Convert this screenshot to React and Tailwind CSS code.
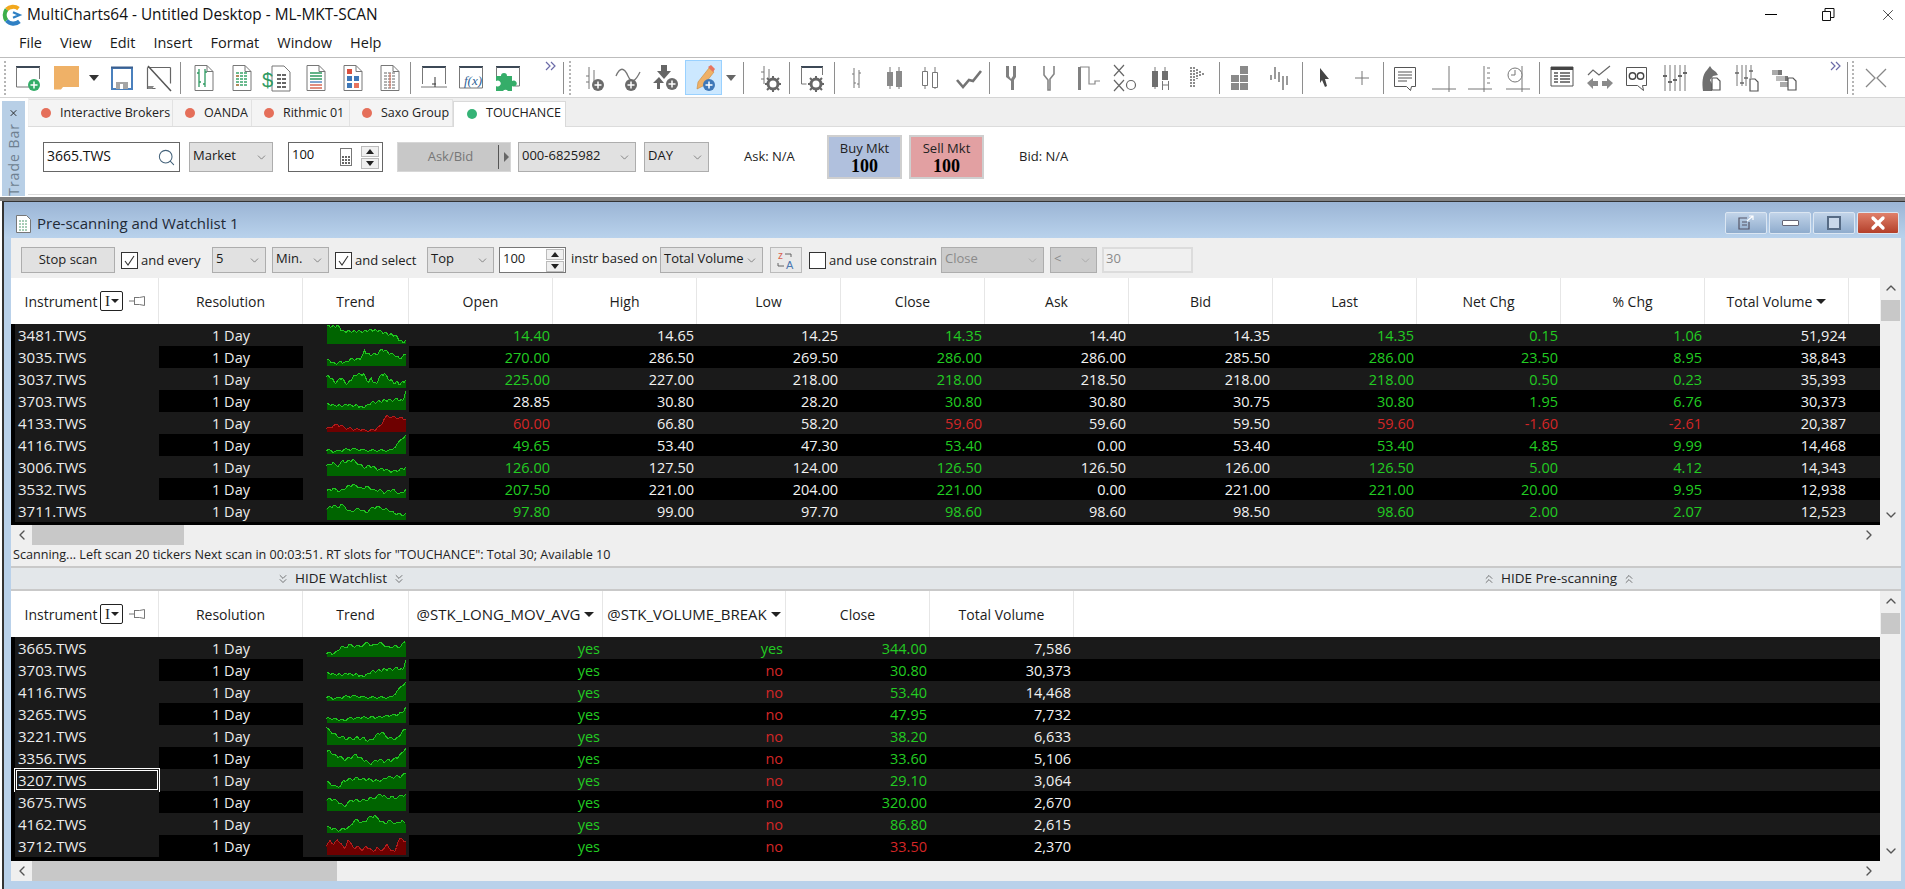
import { ChevronDown, ChevronLeft, ChevronRight, ChevronUp, ChevronsDown, ChevronsUp, Search, X } from "lucide-react";

const G = "#767676";

const Svg = ({ w = 28, h = 28, children }) => (
  <svg width={w} height={h} viewBox={`0 0 ${w} ${h}`} fill="none" className="shrink-0">
    {children}
  </svg>
);

const Plus = ({ x = 20, y = 21, r = 6, c = "#6a6a6a" }) => (
  <g>
    <circle cx={x} cy={y} r={r} fill={c} />
    <path d={`M${x} ${y - r + 2.5}v${2 * r - 5}M${x - r + 2.5} ${y}h${2 * r - 5}`} stroke="#fff" strokeWidth="1.5" />
  </g>
);

const Gear = ({ x = 20, y = 20 }) => (
  <g>
    <circle cx={x} cy={y} r="5" stroke="#666" strokeWidth="3" />
    <path d={`M${x} ${y - 8}v3M${x} ${y + 5}v3M${x - 8} ${y}h3M${x + 5} ${y}h3M${x - 6} ${y - 6}l2 2M${x + 4} ${y + 4}l2 2M${x + 6} ${y - 6}l-2 2M${x - 4} ${y + 4}l-2 2`} stroke="#666" strokeWidth="2" />
  </g>
);

const Doc = ({ children }) => (
  <Svg>
    <path d="M5 1.5h12l6 6v19H5z" fill="#fff" stroke="#777" />
    <path d="M17 1.5v6h6" stroke="#777" />
    {children}
  </Svg>
);

const MiniDoc = ({ x = 18, y = 16 }) => (
  <path d={`M${x} ${y}h5l3 3v9h-8z`} fill="#fff" stroke="#555" strokeWidth="1.2" />
);

const DotHandle = () => <div className="h-[34px] ml-[4px] w-[2px] border-l-2 border-dotted border-[#b5b5b5]" />;

const icons = {
  newChart: (
    <Svg>
      <path d="M2 3h24" stroke="#3c4856" strokeWidth="2" />
      <path d="M2.5 3v20h13M25.5 3v12" stroke="#777" />
      <Plus x={20} y={21} r={6} c="#35ad69" />
    </Svg>
  ),
  folder: (
    <Svg>
      <path d="M1 2h25v21H10l-2 2.5H1z" fill="#efb167" />
    </Svg>
  ),
  save: (
    <Svg>
      <path d="M4 4h20v21H4z" fill="#fff" stroke="#4a80bd" strokeWidth="2" />
      <path d="M3 3.5h22" stroke="#3a5f8f" strokeWidth="2" />
      <path d="M8 18h12v7H8z" fill="#a5a5a5" />
      <path d="M12 20h3v5h-3z" fill="#fff" />
    </Svg>
  ),
  noSave: (
    <Svg>
      <path d="M2.5 3.5h23M25.5 3.5v16M2.5 3.5v21h8" stroke="#666" strokeWidth="1.2" />
      <path d="M3 22h6l-2 3H3z" fill="#888" />
      <path d="M3 2l23 25" stroke="#555" strokeWidth="1.5" />
    </Svg>
  ),
  docBars: (
    <Doc>
      <path d="M9 5v18M15 5v18M9 9H7M9 18h2M15 8h2M15 20h-2" stroke="#2f9a62" strokeWidth="1.3" />
    </Doc>
  ),
  docGrid: (
    <Doc>
      <path d="M8 9h12M8 12h12M8 15h12M8 18h12M8 21h12" stroke="#3aa56b" strokeWidth="1.4" strokeDasharray="3 1" />
      <path d="M8 12h12M8 21h12" stroke="#c97b4a" strokeWidth="1.4" strokeDasharray="3 9" />
    </Doc>
  ),
  docDollar: (
    <Svg w={32}>
      <path d="M10 2h12l6 6v19H10z" fill="#fff" stroke="#777" />
      <path d="M15 11h10M15 15h10M15 19h10M15 23h10" stroke="#666" strokeWidth="2" strokeDasharray="4 1" />
      <text x="0" y="23" fontSize="20" fill="#2f9a62" fontFamily="Liberation Sans">$</text>
    </Svg>
  ),
  docLines: (
    <Doc>
      <path d="M8 9h12M8 12h12M8 15h12" stroke="#2f9a62" strokeWidth="1.3" />
      <path d="M8 18h12" stroke="#3f78b8" strokeWidth="1.3" />
      <path d="M8 21h12M8 24h12" stroke="#d86a55" strokeWidth="1.3" />
    </Doc>
  ),
  docSquares: (
    <Doc>
      <path d="M8 5h5v5H8z" fill="#d9503f" />
      <path d="M8 12h5v5H8zM15 12h5v5h-5z" fill="#3f78b8" />
      <path d="M8 19h5v5H8z" fill="#3f78b8" />
      <path d="M15 19h5v5h-5z" fill="#e8745f" />
    </Doc>
  ),
  docTable: (
    <Doc>
      <path d="M8 9h12M8 12h12M8 15h12M8 18h12M8 21h12M8 24h12" stroke="#666" strokeWidth="1.2" strokeDasharray="3 1" />
      <path d="M14 9v15" stroke="#d86a55" />
    </Doc>
  ),
  winCross: (
    <Svg>
      <path d="M2 3h24" stroke="#3c4856" strokeWidth="2" />
      <path d="M2.5 3v17M25.5 3v17M1 23h26" stroke="#777" />
      <path d="M15 13v10" stroke="#333" />
      <path d="M12 20h4" stroke="#333" />
    </Svg>
  ),
  winFx: (
    <Svg>
      <path d="M2 3h24" stroke="#3c4856" strokeWidth="2" />
      <path d="M2.5 3v21h23V3" stroke="#777" />
      <text x="7" y="21" fontSize="13" fontStyle="italic" fill="#2f5f96" fontFamily="Liberation Serif">f(x)</text>
    </Svg>
  ),
  winPuzzle: (
    <Svg>
      <path d="M2 3h24" stroke="#3c4856" strokeWidth="2" />
      <path d="M2.5 3v10M25.5 3v19h-5" stroke="#777" />
      <path d="M2 12h5a3 3 0 1 1 6 0h5v5a3 3 0 1 1 0 5v5h-4a3 3 0 0 0-5 0H2v-5a3 3 0 1 0 0-5z" fill="#35ad69" />
    </Svg>
  ),
  addBar: (
    <Svg>
      <path d="M9 3v22M14 6v16M9 12H6M9 18H6" stroke={G} />
      <Plus x={18} y={21} r={6} />
    </Svg>
  ),
  addWave: (
    <Svg>
      <path d="M1 12c4-9 8-9 12 0s8 4 12-4" stroke={G} strokeWidth="1.3" />
      <Plus x={16} y={21} r={6} />
    </Svg>
  ),
  addArrow: (
    <Svg>
      <path d="M10 1h6v6h4l-7 8-7-8h4z" fill="#666" />
      <path d="M8 13l5 6H9v6H6v-6H2z" fill="#666" />
      <Plus x={21} y={20} r={6} />
    </Svg>
  ),
  pencil: (
    <Svg>
      <path d="M19 4l5 4-11 14-6 3 1-7z" fill="#efb167" stroke="#c98a3d" strokeWidth="0.6" />
      <path d="M18 3l3-2 4 4-2 3z" fill="#e8745f" />
      <Plus x={19} y={21} r={6} c="#3f78b8" />
    </Svg>
  ),
  gearBar: (
    <Svg>
      <path d="M8 2v18M13 5v12M8 8H5M8 15H5" stroke={G} />
      <Gear x={17} y={20} />
    </Svg>
  ),
  gearWin: (
    <Svg>
      <path d="M3 3h22" stroke="#3c4856" strokeWidth="2" />
      <path d="M3.5 3v17h5M24.5 3v8" stroke="#777" />
      <Gear x={18} y={20} />
    </Svg>
  ),
  bars: (
    <Svg>
      <path d="M11 4v20M16 6v18M11 10H9M11 19h2M16 9h2M16 20h-2" stroke={G} />
    </Svg>
  ),
  candles: (
    <Svg>
      <path d="M9 3v22M18 3v22" stroke={G} />
      <path d="M6 8h6v14H6zM15 7h6v16h-6z" fill="#8a8a8a" />
    </Svg>
  ),
  hollow: (
    <Svg>
      <path d="M8 3v22M18 3v22" stroke={G} />
      <path d="M5.5 7.5h5v14h-5zM15.5 8.5h5v15h-5z" fill="#fff" stroke="#777" />
    </Svg>
  ),
  thick: (
    <Svg>
      <path d="M2 16l6 7 6-7 4 1 8-10" stroke="#747474" strokeWidth="2.6" />
    </Svg>
  ),
  kagi: (
    <Svg>
      <path d="M7 2h3v10l2 3v0l2-3V2h3v11l-2 3v10h-3V17l-5-4z" fill="#808080" />
    </Svg>
  ),
  kagiThin: (
    <Svg>
      <path d="M8 2v9l4 5v10h2V15l4-5V2" stroke="#858585" strokeWidth="1.6" />
    </Svg>
  ),
  step: (
    <Svg>
      <path d="M5 3h9v17h6v-3h5" stroke="#888" strokeWidth="1.2" />
      <path d="M3 3h3v23H3z" fill="#808080" />
    </Svg>
  ),
  xo: (
    <Svg>
      <path d="M4 1l10 11M14 1L4 12M4 16l10 11M14 16L4 27" stroke="#666" strokeWidth="1.2" />
      <circle cx="21" cy="21" r="4.5" stroke="#666" strokeWidth="1.2" />
    </Svg>
  ),
  candleH: (
    <Svg>
      <path d="M8 3v22M18 3v11" stroke={G} />
      <path d="M5 7h6v16H5zM15 7h6v9h-6z" fill="#6f6f6f" />
      <path d="M15.5 17v9M21.5 17v9M15.5 21h6" stroke="#777" />
    </Svg>
  ),
  dotted: (
    <Svg>
      <path d="M7 3v20M10 3v20" stroke="#8c8c8c" strokeWidth="2" strokeDasharray="2 1" />
      <path d="M13 5v10M16 7v6M19 9v2" stroke="#8c8c8c" strokeWidth="2" strokeDasharray="2 1" />
    </Svg>
  ),
  tiles: (
    <Svg>
      <path d="M11 2h8v8h-8zM2 11h8v7H2zM11 11h8v7h-8zM2 19h8v7H2zM11 19h8v7h-8z" fill="#8a8a8a" />
    </Svg>
  ),
  ticks: (
    <Svg>
      <path d="M6 11v5M10 3v12M14 8v10M18 12v14M22 12v9" stroke="#9a9a9a" strokeWidth="2" />
    </Svg>
  ),
  cursor: (
    <Svg>
      <path d="M9 4l9 11h-4l2 7-2 1-3-7-2 3z" fill="#444" />
    </Svg>
  ),
  plus: (
    <Svg>
      <path d="M14 7v14M7 14h14" stroke="#777" />
    </Svg>
  ),
  note: (
    <Svg>
      <path d="M2.5 3.5h21v19h-4l-1 4-4-4h-12z" fill="#fff" stroke="#555" />
      <path d="M6 8h14M6 11h14M6 14h14M6 17h9" stroke="#555" strokeWidth="1.2" />
    </Svg>
  ),
  crossLine: (
    <Svg>
      <path d="M19 2v26M2 25h24" stroke="#777" />
    </Svg>
  ),
  crossTicks: (
    <Svg>
      <path d="M18 2v26M2 25h24" stroke="#777" />
      <path d="M21 4h3M21 9h3M21 14h3M21 19h3" stroke="#777" />
    </Svg>
  ),
  clock: (
    <Svg>
      <path d="M18 2v26M2 25h24" stroke="#777" />
      <circle cx="11" cy="11" r="7" fill="#fff" stroke="#777" />
      <path d="M11 6v5H7" stroke="#777" />
    </Svg>
  ),
  tableWin: (
    <Svg>
      <path d="M3 3h22v19H3z" fill="#fff" stroke="#555" />
      <path d="M3 3h22v3H3z" fill="#444" />
      <path d="M6 9h4M6 12h4M6 15h4M6 18h4M12 9h10M12 12h10M12 15h10M12 18h10" stroke="#555" strokeWidth="1.3" />
    </Svg>
  ),
  lineArrows: (
    <Svg>
      <path d="M2 11l5-5 6 5 11-9" stroke="#666" strokeWidth="1.2" />
      <path d="M1 19l6-5v3h5v5H7v3zM27 19l-6-5v3h-5v5h5v3z" fill="#8a8a8a" />
    </Svg>
  ),
  glasses: (
    <Svg>
      <path d="M3.5 3.5h20v18h-4l1 5-6-5h-11z" fill="#fff" stroke="#555" />
      <circle cx="9.5" cy="12" r="3.2" stroke="#444" strokeWidth="1.4" />
      <circle cx="17.5" cy="12" r="3.2" stroke="#444" strokeWidth="1.4" />
    </Svg>
  ),
  sliders: (
    <Svg>
      <path d="M4 1v26M9 1v26M14 1v26M19 1v26M24 1v26" stroke="#777" />
      <path d="M2 12h4M7 18h4M12 16h4M17 12h4M22 9h4" stroke="#666" strokeWidth="2" />
    </Svg>
  ),
  knight: (
    <Svg>
      <path d="M5 27c-1-8-1-16 4-21l3-4 2 3 4 3 2 3-5 1-3 4 2 4v7z" fill="#6f6f6f" />
      <MiniDoc x={14} y={14} />
    </Svg>
  ),
  slidersDoc: (
    <Svg>
      <path d="M3 1v21M8 1v21M12 1v21M17 1v13" stroke="#777" />
      <path d="M1 9h4M6 19h4M10 14h4M15 7h4" stroke="#666" strokeWidth="1.6" />
      <MiniDoc x={16} y={15} />
    </Svg>
  ),
  blocksDoc: (
    <Svg>
      <path d="M1 6h10v5H1z" fill="#aaa" />
      <path d="M7 6h4v5H7z" fill="#777" />
      <path d="M5 12h9v5H5z" fill="#bbb" />
      <path d="M14 12h3v5h-3z" fill="#777" />
      <path d="M9 18h8v5H9z" fill="#aaa" />
      <MiniDoc x={17} y={14} />
    </Svg>
  ),
  collapse: (
    <Svg>
      <path d="M4 5l9 9-9 9M24 5l-9 9 9 9" stroke="#888" strokeWidth="1.3" />
    </Svg>
  ),
  more: (
    <Svg w={12} h={12}>
      <path d="M1 2l4 4-4 4M6 2l4 4-4 4" stroke="#6b6ba8" strokeWidth="1.2" />
    </Svg>
  ),
  drop: (
    <Svg w={12} h={8}>
      <path d="M1 1h10L6 7z" fill="#333" />
    </Svg>
  ),
  dropGray: (
    <Svg w={12} h={8}>
      <path d="M1 1h10L6 7z" fill="#666" />
    </Svg>
  ),
};

const Slot = ({ w, icon, box }) => (
  <div className={`${w} flex shrink-0 items-center justify-center ${box ? "h-[35px] border border-[#99d1ff] bg-[#cce8ff]" : "h-full"}`}>
    {icons[icon]}
  </div>
);

const Sep = ({ w }) => (
  <div className={`${w} flex h-full shrink-0 items-center justify-center`}>
    <div className="h-[32px] w-[1px] bg-[#8e8e8e]" />
  </div>
);

const MainToolbar = () => (
  <div className="flex h-[40px] items-center border-t border-[#bdbdbd]">
    <div className="w-[8px] shrink-0"><DotHandle /></div>
    <Slot w="w-[40px]" icon="newChart" />
    <Slot w="w-[38px]" icon="folder" />
    <Slot w="w-[16px]" icon="drop" />
    <Slot w="w-[39px]" icon="save" />
    <Slot w="w-[36px]" icon="noSave" />
    <Sep w="w-[6px]" />
    <Slot w="w-[42px]" icon="docBars" />
    <Slot w="w-[34px]" icon="docGrid" />
    <Slot w="w-[37px]" icon="docDollar" />
    <Slot w="w-[39px]" icon="docLines" />
    <Slot w="w-[36px]" icon="docSquares" />
    <Slot w="w-[37px]" icon="docTable" />
    <Sep w="w-[4px]" />
    <Slot w="w-[44px]" icon="winCross" />
    <Slot w="w-[30px]" icon="winFx" />
    <Slot w="w-[44px]" icon="winPuzzle" />
    <div className="flex h-full w-[31px] shrink-0 justify-end pr-[4px] pt-[2px]">{icons.more}</div>
    <Sep w="w-[4px]" />
    <div className="w-[6px] shrink-0"><DotHandle /></div>
    <div className="w-[6px] shrink-0" />
    <Slot w="w-[34px]" icon="addBar" />
    <Slot w="w-[36px]" icon="addWave" />
    <Slot w="w-[36px]" icon="addArrow" />
    <div className="w-[2px] shrink-0" />
    <Slot w="w-[37px]" icon="pencil" box />
    <Slot w="w-[18px]" icon="dropGray" />
    <Sep w="w-[7px]" />
    <div className="w-[5px] shrink-0" />
    <Slot w="w-[36px]" icon="gearBar" />
    <Sep w="w-[2px]" />
    <Slot w="w-[43px]" icon="gearWin" />
    <Sep w="w-[2px]" />
    <Slot w="w-[44px]" icon="bars" />
    <Slot w="w-[32px]" icon="candles" />
    <Slot w="w-[39px]" icon="hollow" />
    <Slot w="w-[38px]" icon="thick" />
    <Sep w="w-[3px]" />
    <Slot w="w-[44px]" icon="kagi" />
    <Slot w="w-[30px]" icon="kagiThin" />
    <Slot w="w-[48px]" icon="step" />
    <Slot w="w-[22px]" icon="xo" />
    <Slot w="w-[52px]" icon="candleH" />
    <Slot w="w-[22px]" icon="dotted" />
    <div className="w-[9px] shrink-0" />
    <Sep w="w-[2px]" />
    <Slot w="w-[46px]" icon="tiles" />
    <Slot w="w-[26px]" icon="ticks" />
    <div className="w-[9px] shrink-0" />
    <Sep w="w-[2px]" />
    <Slot w="w-[44px]" icon="cursor" />
    <Slot w="w-[30px]" icon="plus" />
    <div className="w-[5px] shrink-0" />
    <Sep w="w-[2px]" />
    <Slot w="w-[44px]" icon="note" />
    <Slot w="w-[32px]" icon="crossLine" />
    <Slot w="w-[40px]" icon="crossTicks" />
    <Slot w="w-[36px]" icon="clock" />
    <div className="w-[2px] shrink-0" />
    <Sep w="w-[2px]" />
    <Slot w="w-[44px]" icon="tableWin" />
    <Slot w="w-[32px]" icon="lineArrows" />
    <Slot w="w-[41px]" icon="glasses" />
    <Slot w="w-[36px]" icon="sliders" />
    <Slot w="w-[37px]" icon="knight" />
    <Slot w="w-[36px]" icon="slidersDoc" />
    <Slot w="w-[38px]" icon="blocksDoc" />
    <div className="flex h-full w-[42px] shrink-0 justify-end pr-[4px] pt-[2px]">{icons.more}</div>
    <Sep w="w-[2px]" />
    <div className="w-[7px] shrink-0"><DotHandle /></div>
    <Slot w="w-[42px]" icon="collapse" />
  </div>
);

const Logo = () => (
  <svg width="22" height="24" viewBox="0 0 24 24" fill="none" className="shrink-0">
    <path d="M18 5a10 10 0 0 0-13 1" stroke="#f2a81d" strokeWidth="4.5" />
    <path d="M5 6a10 10 0 0 0 0 12" stroke="#3cae4a" strokeWidth="4.5" />
    <path d="M5 18a10 10 0 0 0 14 1" stroke="#2f80c4" strokeWidth="4.5" />
    <path d="M12 9l7 3-7 3" stroke="#2f80c4" strokeWidth="2.5" />
  </svg>
);

const Chevron = ({ c = "#555" }) => <ChevronDown size={13} strokeWidth={1.2} color={c} className="shrink-0" />;

// grey windows dropdown
const Select = ({ w, label, disabled }) => (
  <div className={`${w} flex h-full shrink-0 items-center justify-between border border-[#adadad] pl-[3px] pr-[4px] ${disabled ? "bg-[#cccccc] text-[#8a8a8a]" : "bg-[#e1e1e1] text-[#1a1a1a]"}`}>
    <span className="mb-[2px] whitespace-nowrap">{label}</span>
    <Chevron c={disabled ? "#999" : "#555"} />
  </div>
);

const Spin = () => (
  <div className="flex h-full shrink-0 flex-col justify-center gap-[1px]">
    <div className="flex h-[11px] w-[18px] items-center justify-center border border-[#bbb] bg-[#f0f0f0]">
      <div className="h-0 w-0 border-x-[4px] border-b-[5px] border-x-transparent border-b-[#222]" />
    </div>
    <div className="flex h-[11px] w-[18px] items-center justify-center border border-[#bbb] bg-[#f0f0f0]">
      <div className="h-0 w-0 border-x-[4px] border-t-[5px] border-x-transparent border-t-[#222]" />
    </div>
  </div>
);

const Tab = ({ w, label, active }) => (
  <div className={`${w} flex shrink-0 items-center gap-[9px] pl-[12px] ${active ? "mt-[3px] h-[26px] self-start border-x border-t border-[#d9d9d9] bg-white pb-[2px] pl-[13px]" : "h-[27px] self-end border-r border-t border-[#e2e2e2] bg-[#f4f4f4]"}`}>
    <span className={`h-[10px] w-[10px] shrink-0 rounded-full ${active ? "bg-[#35b376]" : "bg-[#e56f5a]"}`} />
    <span className="whitespace-nowrap text-[12.5px] text-[#222]">{label}</span>
  </div>
);

const TradeBar = () => (
  <div className="flex h-[98px] bg-white">
    <div className="ml-[2px] mt-[3px] flex h-[95px] w-[23px] shrink-0 flex-col items-center bg-[#b8cfe6]">
      <X size={11} strokeWidth={2.2} color="#222" className="mt-[7px]" />
      <span className="mt-[5px] rotate-180 whitespace-nowrap text-[14px] leading-[23px] tracking-[1px] text-[#6e7f90] [writing-mode:vertical-rl]">Trade Bar</span>
    </div>
    <div className="ml-[3px] flex-1">
      <div className="flex h-[29px] border-b border-[#dcdcdc] bg-[#efefef] pl-[1px]">
        <Tab w="w-[144px]" label="Interactive Brokers" />
        <Tab w="w-[79px]" label="OANDA" />
        <Tab w="w-[98px]" label="Rithmic 01" />
        <Tab w="w-[103px]" label="Saxo Group" />
        <Tab w="w-[113px]" label="TOUCHANCE" active />
      </div>
      <div className="h-[68px] border-b border-[#dcdcdc] text-[13px]">
        <div className="flex h-[60px] items-center pl-[15px]">
          <div className="flex h-[30px] w-[137px] shrink-0 items-center justify-between border border-[#666] pl-[3px] pr-[3px]">
            <span className="mb-[4px] text-[14px] text-[#111]">3665.TWS</span>
            <Search size={19} strokeWidth={1.3} color="#44627a" />
          </div>
          <div className="ml-[9px] h-[30px]"><Select w="w-[84px]" label="Market" /></div>
          <div className="ml-[15px] flex h-[30px] w-[95px] shrink-0 items-center justify-between border border-[#666] pl-[3px] pr-[3px]">
            <span className="mb-[4px] text-[#111]">100</span>
            <div className="ml-auto mr-[9px] grid h-[18px] w-[12px] grid-cols-3 content-end gap-[1px] border border-[#777] p-[1px] pt-[4px]">
              <span className="h-[2px] bg-[#666]" /><span className="h-[2px] bg-[#666]" /><span className="h-[2px] bg-[#666]" />
              <span className="h-[2px] bg-[#666]" /><span className="h-[2px] bg-[#666]" /><span className="h-[2px] bg-[#666]" />
              <span className="h-[2px] bg-[#666]" /><span className="h-[2px] bg-[#666]" /><span className="h-[2px] bg-[#666]" />
            </div>
            <Spin />
          </div>
          <div className="ml-[14px] flex h-[30px] w-[114px] shrink-0 items-center border border-[#d7d7d7] bg-[#c8c8c8] text-[#777]">
            <span className="flex-1 pl-[6px] text-center">Ask/Bid</span>
            <div className="mx-[1px] flex h-[24px] w-[11px] items-center justify-end border-l border-[#555]">
              <div className="h-0 w-0 border-y-[5px] border-l-[5px] border-y-transparent border-l-[#666]" />
            </div>
          </div>
          <div className="ml-[7px] h-[30px]"><Select w="w-[118px]" label="000-6825982" /></div>
          <div className="ml-[8px] h-[30px]"><Select w="w-[65px]" label="DAY" /></div>
          <span className="ml-[35px] w-[83px] shrink-0 text-[#222]">Ask: N/A</span>
          <div className="flex h-[44px] w-[75px] shrink-0 flex-col items-center justify-center border-2 border-[#cfcfcf] bg-[#b0c0dd] leading-[18px] text-[#222]">
            <span>Buy Mkt</span>
            <span className="font-['Liberation_Serif',serif] text-[18px] font-bold text-black">100</span>
          </div>
          <div className="ml-[7px] flex h-[44px] w-[75px] shrink-0 flex-col items-center justify-center border-2 border-[#cfcfcf] bg-[#e2a0a2] leading-[18px] text-[#222]">
            <span>Sell Mkt</span>
            <span className="font-['Liberation_Serif',serif] text-[18px] font-bold text-black">100</span>
          </div>
          <span className="ml-[35px] text-[#222]">Bid: N/A</span>
        </div>
      </div>
    </div>
  </div>
);

const Check = ({ on }) => (
  <div className="flex h-[17px] w-[17px] shrink-0 items-center justify-center border border-[#333] bg-white">
    {on && (
      <svg width="13" height="13" viewBox="0 0 13 13" fill="none">
        <path d="M2 7l3 4 6-9" stroke="#333" strokeWidth="1.1" />
      </svg>
    )}
  </div>
);

const ScanToolbar = () => (
  <div className="flex h-[40px] items-start bg-[#efefef] pl-[10px] pt-[9px] text-[13px] text-[#222]">
    <div className="flex h-[26px] w-[94px] shrink-0 items-center justify-center border border-[#adadad] bg-[#e1e1e1]">Stop scan</div>
    <div className="ml-[6px] mt-[4px] flex items-center gap-[3px]"><Check on /><span className="w-[68px] whitespace-nowrap">and every</span></div>
    <div className="ml-[3px] h-[26px]"><Select w="w-[54px]" label="5" /></div>
    <div className="ml-[6px] h-[26px]"><Select w="w-[57px]" label="Min." /></div>
    <div className="ml-[6px] mt-[4px] flex items-center gap-[3px]"><Check on /><span className="w-[72px] whitespace-nowrap">and select</span></div>
    <div className="h-[26px]"><Select w="w-[67px]" label="Top" /></div>
    <div className="ml-[5px] flex h-[26px] w-[67px] shrink-0 items-center justify-between border border-[#777] bg-white pl-[3px] pr-[1px]">
      <span className="mb-[2px]">100</span>
      <Spin />
    </div>
    <span className="ml-[5px] mt-[2px] w-[89px] shrink-0 whitespace-nowrap">instr based on</span>
    <div className="h-[26px]"><Select w="w-[103px]" label="Total Volume" /></div>
    <div className="ml-[7px] flex h-[26px] w-[32px] shrink-0 items-center justify-center border border-[#bbb] bg-[#e9e9e9]">
      <svg width="22" height="22" viewBox="0 0 22 22" fill="none">
        <text x="3" y="10" fontSize="10" fill="#d9634f" fontFamily="Liberation Sans">z</text>
        <text x="11" y="20" fontSize="11" fill="#4c78b0" fontFamily="Liberation Sans">A</text>
        <path d="M10 5h6v3M3 14v3h6" stroke="#555" strokeWidth="0.9" />
      </svg>
    </div>
    <div className="ml-[7px] flex items-center gap-[3px] pt-[4px]"><Check /><span className="w-[112px] whitespace-nowrap">and use constrain</span></div>
    <div className="h-[26px]"><Select w="w-[103px]" label="Close" disabled /></div>
    <div className="ml-[6px] h-[26px]"><Select w="w-[47px]" label="<" disabled /></div>
    <div className="ml-[5px] flex h-[26px] w-[91px] shrink-0 items-center border-2 border-[#dcdcdc] bg-[#f0f0f0] pl-[2px] text-[#8a8a8a]">
      <span className="mb-[2px]">30</span>
    </div>
  </div>
);

// add a jagged midpoint between samples so the trend looks like tick data
const roughen = (data) =>
  data.flatMap((v, i) => {
    if (i === data.length - 1) return [v];
    const mid = Math.round((v + data[i + 1]) / 2 + (i % 2 ? 1 : -1));
    return [v, Math.min(18, Math.max(0, mid))];
  });

const Spark = ({ data, red }) => {
  const pts = roughen(data);
  const step = 79 / (pts.length - 1);
  const line = pts.map((v, i) => `${(i * step + 0.5).toFixed(1)},${v + 0.5}`).join(" ");
  return (
    <svg width="80" height="20" viewBox="0 0 80 20" shapeRendering="crispEdges" className="ml-[23px] block">
      <polygon points={`0.5,19 ${line} 79.5,19`} fill={red ? "#6e0000" : "#006400"} />
      <polyline points={line} fill="none" stroke={red ? "#b41c1c" : "#21c421"} strokeWidth="1" />
    </svg>
  );
};

const g = "g";
const r = "r";
const tone = { g: "text-[#22cc22]", r: "text-[#d42626]", w: "text-[#f2f2f2]" };

// [instrument, spark, cells] - a cell is "text" or [text, tone]
const S = {
  a3481: [0, 0, 1, 1, 0, 2, 5, 6, 5, 6, 6, 6, 5, 6, 6, 5, 5, 4, 5, 5, 5, 6, 7, 8, 9, 9, 10, 12, 15, 17, 15],
  a3035: [12, 13, 15, 16, 15, 14, 15, 14, 12, 11, 12, 11, 10, 3, 6, 8, 6, 7, 4, 2, 3, 5, 6, 7, 9, 11, 9, 7],
  a3037: [7, 7, 9, 13, 12, 9, 9, 13, 14, 11, 8, 6, 4, 5, 4, 9, 13, 8, 13, 14, 8, 5, 4, 7, 11, 11, 14, 12, 15, 12, 11],
  a3703: [12, 13, 13, 14, 14, 14, 14, 13, 13, 14, 14, 14, 15, 16, 14, 13, 11, 11, 10, 10, 9, 9, 8, 9, 8, 7, 9, 9, 0],
  a4133: [15, 14, 12, 11, 12, 14, 15, 15, 16, 16, 16, 17, 17, 16, 15, 12, 6, 2, 4, 3, 5, 4, 6],
  a4116: [15, 15, 16, 15, 14, 14, 13, 14, 14, 15, 15, 15, 15, 15, 15, 14, 9, 4, 0],
  a3006: [8, 7, 5, 8, 7, 3, 5, 3, 2, 5, 7, 9, 10, 8, 9, 11, 12, 11, 12, 13, 14, 13, 13, 11, 10],
  a3532: [12, 10, 9, 10, 12, 10, 8, 6, 5, 6, 8, 9, 7, 8, 10, 11, 10, 12, 13, 11, 10, 12, 14, 13, 10],
  a3711: [8, 5, 4, 6, 3, 5, 9, 10, 8, 7, 9, 11, 8, 6, 5, 6, 8, 8, 10, 12, 12, 14, 12],
  a3665: [15, 14, 15, 12, 8, 9, 6, 8, 7, 8, 6, 4, 7, 6, 4, 6, 8, 9, 7, 9, 6, 3],
  a3265: [14, 14, 14, 15, 15, 16, 14, 13, 14, 13, 13, 13, 13, 12, 13, 12, 12, 11, 11, 10, 10, 8, 3],
  a3221: [1, 4, 7, 9, 11, 10, 13, 11, 13, 10, 13, 11, 15, 13, 11, 7, 6, 8, 12, 11, 13, 10, 5, 3],
  a3356: [4, 2, 6, 7, 8, 10, 11, 9, 8, 6, 9, 11, 12, 15, 14, 12, 11, 12, 13, 11, 12, 9, 8, 4, 0],
  a3207: [11, 13, 15, 16, 16, 10, 10, 8, 9, 7, 9, 8, 9, 9, 10, 10, 10, 8, 6, 7, 6, 6, 5, 3],
  a3675: [8, 6, 7, 9, 11, 14, 10, 8, 7, 9, 7, 8, 5, 6, 4, 2, 3, 6, 4, 6, 4, 3, 2],
  a4162: [12, 13, 14, 15, 16, 14, 14, 11, 7, 5, 8, 7, 4, 2, 1, 4, 7, 9, 6, 7, 9, 8, 6, 9],
  a3712: [10, 4, 8, 3, 7, 12, 4, 8, 12, 10, 14, 10, 12, 15, 11, 14, 12, 8, 14, 15, 4, 2, 5],
};

const scanColumns = [
  { label: "Open", w: "w-[144px]" },
  { label: "High", w: "w-[144px]" },
  { label: "Low", w: "w-[144px]" },
  { label: "Close", w: "w-[144px]" },
  { label: "Ask", w: "w-[144px]" },
  { label: "Bid", w: "w-[144px]" },
  { label: "Last", w: "w-[144px]" },
  { label: "Net Chg", w: "w-[144px]" },
  { label: "% Chg", w: "w-[144px]" },
  { label: "Total Volume", w: "w-[144px]", sort: true },
];

const scanRows = [
  ["3481.TWS", S.a3481, 0, [["14.40", g], "14.65", "14.25", ["14.35", g], "14.40", "14.35", ["14.35", g], ["0.15", g], ["1.06", g], "51,924"]],
  ["3035.TWS", S.a3035, 0, [["270.00", g], "286.50", "269.50", ["286.00", g], "286.00", "285.50", ["286.00", g], ["23.50", g], ["8.95", g], "38,843"]],
  ["3037.TWS", S.a3037, 0, [["225.00", g], "227.00", "218.00", ["218.00", g], "218.50", "218.00", ["218.00", g], ["0.50", g], ["0.23", g], "35,393"]],
  ["3703.TWS", S.a3703, 0, ["28.85", "30.80", "28.20", ["30.80", g], "30.80", "30.75", ["30.80", g], ["1.95", g], ["6.76", g], "30,373"]],
  ["4133.TWS", S.a4133, 1, [["60.00", r], "66.80", "58.20", ["59.60", r], "59.60", "59.50", ["59.60", r], ["-1.60", r], ["-2.61", r], "20,387"]],
  ["4116.TWS", S.a4116, 0, [["49.65", g], "53.40", "47.30", ["53.40", g], "0.00", "53.40", ["53.40", g], ["4.85", g], ["9.99", g], "14,468"]],
  ["3006.TWS", S.a3006, 0, [["126.00", g], "127.50", "124.00", ["126.50", g], "126.50", "126.00", ["126.50", g], ["5.00", g], ["4.12", g], "14,343"]],
  ["3532.TWS", S.a3532, 0, [["207.50", g], "221.00", "204.00", ["221.00", g], "0.00", "221.00", ["221.00", g], ["20.00", g], ["9.95", g], "12,938"]],
  ["3711.TWS", S.a3711, 0, [["97.80", g], "99.00", "97.70", ["98.60", g], "98.60", "98.50", ["98.60", g], ["2.00", g], ["2.07", g], "12,523"]],
];

const watchColumns = [
  { label: "@STK_LONG_MOV_AVG", w: "w-[194px]", sort: true, big: true },
  { label: "@STK_VOLUME_BREAK", w: "w-[183px]", sort: true, big: true },
  { label: "Close", w: "w-[144px]" },
  { label: "Total Volume", w: "w-[144px]" },
];

const yes = ["yes", g];
const no = ["no", r];
const watchRows = [
  ["3665.TWS", S.a3665, 0, [yes, yes, ["344.00", g], "7,586"]],
  ["3703.TWS", S.a3703, 0, [yes, no, ["30.80", g], "30,373"]],
  ["4116.TWS", S.a4116, 0, [yes, no, ["53.40", g], "14,468"]],
  ["3265.TWS", S.a3265, 0, [yes, no, ["47.95", g], "7,732"]],
  ["3221.TWS", S.a3221, 0, [yes, no, ["38.20", g], "6,633"]],
  ["3356.TWS", S.a3356, 0, [yes, no, ["33.60", g], "5,106"]],
  ["3207.TWS", S.a3207, 0, [yes, no, ["29.10", g], "3,064"], true],
  ["3675.TWS", S.a3675, 0, [yes, no, ["320.00", g], "2,670"]],
  ["4162.TWS", S.a4162, 0, [yes, no, ["86.80", g], "2,615"]],
  ["3712.TWS", S.a3712, 1, [yes, no, ["33.50", r], "2,370"]],
];

const HeadCell = ({ w, children }) => (
  <div className={`${w} flex h-full shrink-0 items-center justify-center whitespace-nowrap border-r border-[#e6e6e6]`}>
    {children}
  </div>
);

const GridHeader = ({ columns }) => (
  <div className="flex h-[46px] bg-white pl-[4px] text-[14px] text-[#1c1c1c]">
    <HeadCell w="w-[144px]">
      <span className="ml-[10px]">Instrument</span>
      <div className="ml-[3px] flex h-[20px] w-[23px] shrink-0 items-center justify-center gap-[1px] rounded-[2px] border border-[#222]">
        <span className="font-['Liberation_Serif',serif] text-[15px] leading-none">I</span>
        <div className="h-0 w-0 border-x-[4px] border-t-[4px] border-x-transparent border-t-[#222]" />
      </div>
      <svg width="17" height="12" viewBox="0 0 17 12" fill="none" className="ml-[6px] mr-[12px] shrink-0">
        <path d="M0 6h5M5.5 2.5h5l5-1v9l-5-1h-5zM5.5 2v8" stroke="#777" />
      </svg>
    </HeadCell>
    <HeadCell w="w-[144px]">Resolution</HeadCell>
    <HeadCell w="w-[106px]">Trend</HeadCell>
    {columns.map((c) => (
      <HeadCell key={c.label} w={c.w}>
        <span className={c.big ? "text-[15px]" : ""}>{c.label}</span>
        {c.sort && <div className="ml-[4px] h-0 w-0 border-x-[5px] border-t-[5px] border-x-transparent border-t-[#222]" />}
      </HeadCell>
    ))}
  </div>
);

const GridRow = ({ row, index, columns }) => {
  const [name, spark, red, cells, selected] = row;
  return (
    <div className={`flex h-[22px] items-center text-[14.5px] ${index % 2 === 0 ? "bg-[#1a1a1a]" : "bg-black"}`}>
      <div className={`flex h-full w-[144px] shrink-0 items-center bg-[#1a1a1a] pl-[3px] pt-[1px] text-[15px] text-[#ececec] ${selected ? "outline-double outline-3 -outline-offset-2 outline-white" : ""}`}>{name}</div>
      <div className="flex h-full w-[144px] shrink-0 items-center justify-center pt-[1px] text-[#ececec]">1 Day</div>
      <div className="flex h-full w-[106px] shrink-0 items-center bg-[#1a1a1a]"><Spark data={spark} red={red} /></div>
      {cells.map((cell, i) => {
        const text = Array.isArray(cell) ? cell[0] : cell;
        const color = Array.isArray(cell) ? tone[cell[1]] : tone.w;
        return (
          <div key={i} className={`${columns[i].w} shrink-0 pr-[3px] pt-[1px] text-right ${color}`}>{text}</div>
        );
      })}
    </div>
  );
};

const HScroll = ({ thumb }) => (
  <div className="flex h-[20px] items-center bg-[#efefef]">
    <div className="flex w-[21px] shrink-0 justify-center"><ChevronLeft size={16} strokeWidth={2} color="#555" /></div>
    <div className={`${thumb} h-full shrink-0 bg-[#c8c8c8]`} />
    <div className="ml-auto mr-[24px]"><ChevronRight size={16} strokeWidth={2} color="#555" /></div>
  </div>
);

const VScroll = () => (
  <div className="flex w-[21px] shrink-0 flex-col items-center bg-[#efefef]">
    <ChevronUp size={16} strokeWidth={2} color="#555" className="mt-[2px]" />
    <div className="mt-[4px] h-[21px] w-[19px] bg-[#c8c8c8]" />
    <ChevronDown size={16} strokeWidth={2} color="#555" className="mb-[2px] mt-auto" />
  </div>
);

const Grid = ({ columns, rows, h }) => (
  <div className={`flex ${h}`}>
    <div className="min-w-0 flex-1">
      <GridHeader columns={columns} />
      <div className="h-[calc(100%-46px)] bg-black pl-[4px]">
        {rows.map((row, i) => (
          <GridRow key={row[0]} row={row} index={i} columns={columns} />
        ))}
      </div>
    </div>
    <VScroll />
  </div>
);

const WinButton = ({ children, close }) => (
  <div className={`flex h-[22px] w-[42px] items-center justify-center rounded-[2px] border border-[#dbe6f2] ${close ? "bg-linear-to-b from-[#e0806a] to-[#b33f2a]" : "bg-linear-to-b from-[#c2d4e9] to-[#8faccd]"}`}>
    {children}
  </div>
);

const WindowTitle = () => (
  <div className="flex h-[36px] items-start bg-linear-to-b from-[#9bb5d5] to-[#b9d2ec] pl-[12px] pt-[11px]">
    <svg width="15" height="18" viewBox="0 0 15 18" fill="none" className="mt-[2px] shrink-0">
      <path d="M.5.5h10l4 4v13H.5z" fill="#fff" stroke="#777" />
      <path d="M3 6h9M3 9h9M3 12h9M3 15h9" stroke="#4f9a6f" strokeDasharray="2 1" />
    </svg>
    <span className="ml-[6px] text-[15px] leading-[20px] text-[#1f2a36]">Pre-scanning and Watchlist 1</span>
    <div className="ml-auto mr-[6px] -mt-[1px] flex gap-[2px]">
      <WinButton>
        <svg width="18" height="16" viewBox="0 0 18 16" fill="none">
          <path d="M12 7v7H2V3h8M5 7h5M5 10h5" stroke="#556" strokeWidth="1.2" />
          <path d="M10 6l6-5M12 1h4v4" stroke="#fff" strokeWidth="1.2" />
        </svg>
      </WinButton>
      <WinButton><div className="h-[6px] w-[17px] rounded-[1px] border border-[#667] bg-white" /></WinButton>
      <WinButton><div className="h-[14px] w-[14px] border-2 border-[#566b85] bg-[#c9d8ea]" /></WinButton>
      <WinButton close><X size={20} strokeWidth={4} color="#fff" /></WinButton>
    </div>
  </div>
);

const App = () => (
  <div className="h-[889px] w-[1905px] overflow-hidden bg-white font-['Open_Sans','Noto_Sans',sans-serif] text-[#111]">
    {/* Title bar */}
    <div className="flex h-[29px] items-center pl-[2px] text-[15.4px]">
      <Logo />
      <span className="ml-[3px]">MultiCharts64 - Untitled Desktop - ML-MKT-SCAN</span>
      <div className="ml-auto flex items-center">
        <div className="mr-[45px] h-[1px] w-[12px] bg-black" />
        <svg width="13" height="13" viewBox="0 0 13 13" fill="none" className="mr-[44px]">
          <path d="M.5 3.5h8v9h-8zM3 3V.5h9v9H9" stroke="#111" />
        </svg>
        <X size={18} strokeWidth={1} color="#111" className="mr-[8px]" />
      </div>
    </div>
    {/* Menu bar */}
    <div className="flex h-[28px] items-center gap-[18px] pl-[19px] text-[14.5px] text-[#1a1a1a]">
      <span>File</span>
      <span>View</span>
      <span>Edit</span>
      <span>Insert</span>
      <span>Format</span>
      <span>Window</span>
      <span>Help</span>
    </div>
    <MainToolbar />
    <div className="h-[1px] bg-[#d5d5d5]" />
    <TradeBar />
    <div className="h-[1px]" />
    <div className="h-[4px] bg-[#808080]" />
    {/* Pre-scanning window */}
    <div className="h-[688px] pl-[2px]">
      <div className="h-full border-l-2 border-t border-[#333] bg-[#b9d1ea]">
        <WindowTitle />
        <div className="ml-[7px] mr-[4px] h-[643px] bg-[#efefef] text-[13px]">
          <ScanToolbar />
          <Grid columns={scanColumns} rows={scanRows} h="h-[247px]" />
          <HScroll thumb="w-[152px]" />
          <div className="flex h-[21px] items-center pl-[2px] text-[12.6px] text-[#222]">
            Scanning... Left scan 20 tickers Next scan in 00:03:51. RT slots for "TOUCHANCE": Total 30; Available 10
          </div>
          <div className="flex h-[25px] items-center justify-between border-y-[2.5px] border-[#c9c9c9] bg-[#e3e7ea] px-[265px] text-[13.5px] text-[#222]">
            <div className="flex items-center gap-[5px]">
              <ChevronsDown size={14} strokeWidth={1} />
              <span>HIDE Watchlist</span>
              <ChevronsDown size={14} strokeWidth={1} />
            </div>
            <div className="flex items-center gap-[5px]">
              <ChevronsUp size={14} strokeWidth={1} />
              <span>HIDE Pre-scanning</span>
              <ChevronsUp size={14} strokeWidth={1} />
            </div>
          </div>
          <Grid columns={watchColumns} rows={watchRows} h="h-[270px]" />
          <HScroll thumb="w-[305px]" />
        </div>
      </div>
    </div>
  </div>
);

export default App;
